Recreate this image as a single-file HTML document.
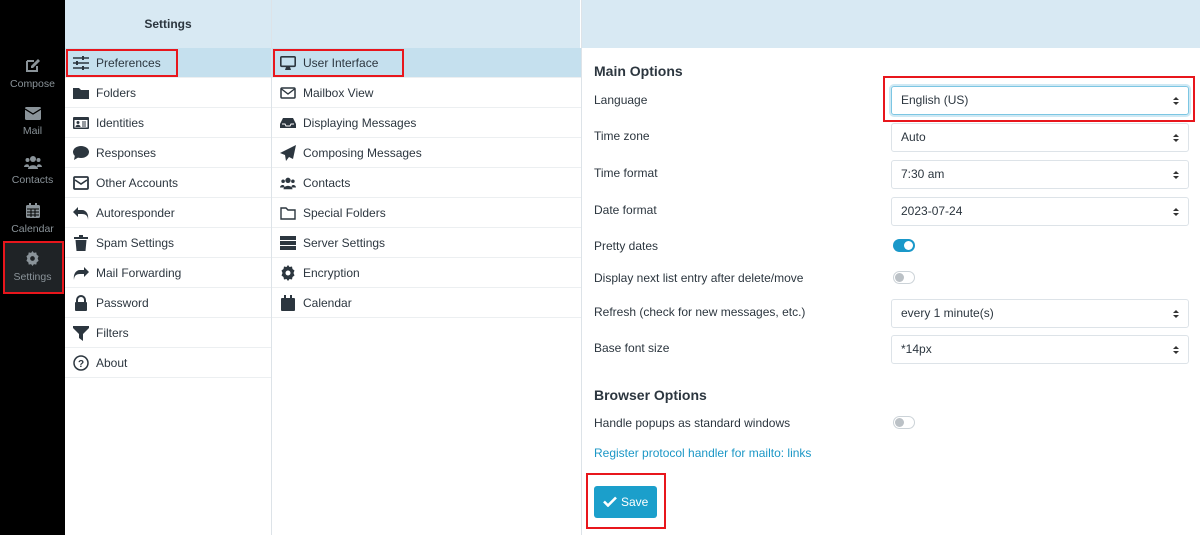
<!DOCTYPE html>
<html><head><meta charset="utf-8"><style>
*{box-sizing:border-box;margin:0;padding:0}
body{width:1200px;height:535px;overflow:hidden;background:#fff;font-family:"Liberation Sans",sans-serif;color:#2c363f;position:relative;font-size:12px}
.abs{position:absolute}
#side{left:0;top:0;width:65px;height:535px;background:#000}
.si{position:absolute;left:0;width:65px;text-align:center;color:#8a9399;font-size:10.5px}
.si svg{display:block;margin:0 auto 5px}
.hdr{position:absolute;top:0;height:48px;background:#d8e9f3}
.row{position:absolute;height:30px;border-bottom:1px solid #eceff1;display:flex;align-items:center;font-size:12px;color:#2c363f}
.row svg{width:16px;height:16px;margin:0 7px 0 8px;flex:none}
.sel{background:#c5e0ee}
.lbl{position:absolute;left:594px;font-size:12px;color:#2c363f}
.sel2{position:absolute;left:891px;width:298px;height:29px;border:1px solid #dde3e8;border-radius:3px;font-size:12px;padding:0 0 0 9px;line-height:27px;color:#2c363f}
.sel2:after{content:"";position:absolute;right:9px;top:10px;border:3px solid transparent;border-bottom:3.5px solid #333;border-top:none}
.sel2:before{content:"";position:absolute;right:9px;top:15px;border:3px solid transparent;border-top:3.5px solid #333;border-bottom:none}
.red{position:absolute;border:2px solid #e8161c}
.tg{position:absolute;left:893px;width:22px;height:13px;border-radius:7px}
.tg.on{background:#1a98c9}
.tg.on:after{content:"";position:absolute;right:2px;top:2px;width:9px;height:9px;border-radius:50%;background:#fff}
.tg.off{border:1px solid #ccd3d8;background:#fff}
.tg.off:after{content:"";position:absolute;left:1px;top:1px;width:9px;height:9px;border-radius:50%;background:#bbc1c6}
h3{position:absolute;left:594px;font-size:14px;font-weight:bold;color:#2c363f}
</style></head><body>
<div id="side" class="abs"></div>
<div class="si" style="top:58px"><svg width="16" height="15" viewBox="0 0 16 15"><path d="M2 3h7M2 3v10h10V8" stroke="#8a9399" stroke-width="2" fill="none"/><path d="M13 1l2 2-7 7H6V8z" fill="#8a9399"/></svg>Compose</div>
<div class="si" style="top:107px"><svg width="16" height="13" viewBox="0 0 16 13"><rect x="0" y="0" width="16" height="13" rx="1.5" fill="#8a9399"/><path d="M0 2l8 5 8-5" stroke="#000" stroke-width="1.3" fill="none"/></svg>Mail</div>
<div class="si" style="top:155px"><svg width="18" height="14" viewBox="0 0 18 14"><circle cx="9" cy="4" r="3" fill="#8a9399"/><circle cx="3.5" cy="5" r="2" fill="#8a9399"/><circle cx="14.5" cy="5" r="2" fill="#8a9399"/><path d="M4 14c0-5 10-5 10 0zM0 12c0-3 5-4 5-1v1zM18 12c0-3-5-4-5-1v1z" fill="#8a9399"/></svg>Contacts</div>
<div class="si" style="top:203px"><svg width="14" height="15" viewBox="0 0 14 15"><rect x="0" y="2" width="14" height="13" rx="1.5" fill="#8a9399"/><rect x="3" y="0" width="2" height="4" fill="#8a9399"/><rect x="9" y="0" width="2" height="4" fill="#8a9399"/><path d="M1 6h12M1 9h12M1 12h12M5 6v8M9 6v8" stroke="#000" stroke-width="1"/></svg>Calendar</div>
<div class="abs" style="left:3px;top:241px;width:61px;height:53px;background:#1f2326;border:2px solid #e8161c"></div>
<div class="si" style="top:251px"><svg width="15" height="15" viewBox="0 0 16 16"><path d="M8 0l1.5 2 2.5-.5.5 2.5 2 1.5-1 2.5 1 2.5-2 1.5-.5 2.5-2.5-.5L8 16l-1.5-2-2.5.5-.5-2.5-2-1.5 1-2.5-1-2.5 2-1.5.5-2.5 2.5.5z" fill="#8a9399"/><circle cx="8" cy="8" r="2.5" fill="#1f2326"/></svg>Settings</div>

<div class="hdr" style="left:65px;width:206px;text-align:center;line-height:48px;font-weight:bold;font-size:12px;color:#2c363f">Settings</div>
<div class="hdr" style="left:272px;width:308px"></div>
<div class="hdr" style="left:582px;width:618px"></div>
<div class="abs" style="left:271px;top:0;width:1px;height:535px;background:#dde3e8"></div>
<div class="abs" style="left:581px;top:0;width:1px;height:535px;background:#dde3e8"></div>

<div class="row sel" style="left:65px;top:48px;width:206px"><svg viewBox="0 0 16 16"><path d="M0 3h16M0 8h16M0 13h16" stroke="#2c363f" stroke-width="1.5"/><path d="M10 1v4M4 6v4M10 11v4" stroke="#2c363f" stroke-width="2"/></svg>Preferences</div>
<div class="row" style="left:65px;top:78px;width:206px"><svg viewBox="0 0 16 16"><path d="M0 3h6l2 2h8v9H0z" fill="#2c363f"/></svg>Folders</div>
<div class="row" style="left:65px;top:108px;width:206px"><svg viewBox="0 0 16 16"><rect x="0" y="2" width="16" height="12" rx="1" fill="#2c363f"/><rect x="1.5" y="5" width="13" height="7.5" fill="#fff"/><circle cx="5" cy="7.5" r="1.5" fill="#2c363f"/><path d="M2.5 12c0-3 5-3 5 0z" fill="#2c363f"/><path d="M9 7h4M9 9h4M9 11h4" stroke="#2c363f"/></svg>Identities</div>
<div class="row" style="left:65px;top:138px;width:206px"><svg viewBox="0 0 16 16"><ellipse cx="8" cy="7" rx="8" ry="6" fill="#2c363f"/><path d="M2 10l-1 5 5-3z" fill="#2c363f"/></svg>Responses</div>
<div class="row" style="left:65px;top:168px;width:206px"><svg viewBox="0 0 16 16"><rect x="1" y="2" width="14" height="12" rx="1" stroke="#2c363f" stroke-width="1.8" fill="none"/><path d="M2 5l6 4 6-4" stroke="#2c363f" stroke-width="1.6" fill="none"/></svg>Other Accounts</div>
<div class="row" style="left:65px;top:198px;width:206px"><svg viewBox="0 0 16 16"><path d="M5 2L0 7l5 5V9h4c4 0 6 2 6 6 1-6-2-10-6-10H5z" fill="#2c363f"/></svg>Autoresponder</div>
<div class="row" style="left:65px;top:228px;width:206px"><svg viewBox="0 0 16 16"><path d="M1 2h14v2H1zM6 0h4v2H6zM2.5 5h11l-1 11h-9z" fill="#2c363f"/></svg>Spam Settings</div>
<div class="row" style="left:65px;top:258px;width:206px"><svg viewBox="0 0 16 16"><path d="M11 2l5 5-5 5V9H7c-4 0-6 2-6 6-1-6 2-10 6-10h4z" fill="#2c363f"/></svg>Mail Forwarding</div>
<div class="row" style="left:65px;top:288px;width:206px"><svg viewBox="0 0 16 16"><path d="M4 7V5a4 4 0 018 0v2" stroke="#2c363f" stroke-width="2" fill="none"/><rect x="2" y="7" width="12" height="9" rx="1" fill="#2c363f"/></svg>Password</div>
<div class="row" style="left:65px;top:318px;width:206px"><svg viewBox="0 0 16 16"><path d="M0 1h16v2l-6 6v7l-4-3V9L0 3z" fill="#2c363f"/></svg>Filters</div>
<div class="row" style="left:65px;top:348px;width:206px"><svg viewBox="0 0 16 16"><circle cx="8" cy="8" r="7" stroke="#2c363f" stroke-width="1.5" fill="none"/><text x="8" y="12" font-size="10" font-weight="bold" text-anchor="middle" fill="#2c363f" font-family="Liberation Sans">?</text></svg>About</div>
<div class="red" style="left:66px;top:49px;width:112px;height:28px"></div>

<div class="row sel" style="left:272px;top:48px;width:309px"><svg viewBox="0 0 16 16"><rect x="0.8" y="1.8" width="14.4" height="9.5" rx="1" stroke="#2c363f" stroke-width="1.6" fill="none"/><path d="M6 12l-1 3h6l-1-3z" fill="#2c363f"/></svg>User Interface</div>
<div class="row" style="left:272px;top:78px;width:309px"><svg viewBox="0 0 16 16"><rect x="1" y="3" width="14" height="10" rx="1" stroke="#2c363f" stroke-width="1.5" fill="none"/><path d="M1.5 4l6.5 5 6.5-5" stroke="#2c363f" stroke-width="1.4" fill="none"/></svg>Mailbox View</div>
<div class="row" style="left:272px;top:108px;width:309px"><svg viewBox="0 0 16 16"><path d="M3 3h10l3 6v4H0V9z" fill="#2c363f"/><path d="M2 9h3l1 2h4l1-2h3" stroke="#fff" fill="none"/></svg>Displaying Messages</div>
<div class="row" style="left:272px;top:138px;width:309px"><svg viewBox="0 0 16 16"><path d="M16 0L0 8l5 2 1 6 3-4 4 2z" fill="#2c363f"/></svg>Composing Messages</div>
<div class="row" style="left:272px;top:168px;width:309px"><svg viewBox="0 0 18 16"><circle cx="9" cy="5" r="3" fill="#2c363f"/><circle cx="3.5" cy="6" r="2" fill="#2c363f"/><circle cx="14.5" cy="6" r="2" fill="#2c363f"/><path d="M4 15c0-5 10-5 10 0zM0 13c0-3 5-4 5-1v1zM18 13c0-3-5-4-5-1v1z" fill="#2c363f"/></svg>Contacts</div>
<div class="row" style="left:272px;top:198px;width:309px"><svg viewBox="0 0 16 16"><path d="M1 3h5l2 2h7v9H1z" stroke="#2c363f" stroke-width="1.4" fill="none"/></svg>Special Folders</div>
<div class="row" style="left:272px;top:228px;width:309px"><svg viewBox="0 0 16 16"><rect x="0" y="1" width="16" height="4" fill="#2c363f"/><rect x="0" y="6" width="16" height="4" fill="#2c363f"/><rect x="0" y="11" width="16" height="4" fill="#2c363f"/></svg>Server Settings</div>
<div class="row" style="left:272px;top:258px;width:309px"><svg viewBox="0 0 16 16"><path d="M8 0l1.5 2 2.5-.5.5 2.5 2 1.5-1 2.5 1 2.5-2 1.5-.5 2.5-2.5-.5L8 16l-1.5-2-2.5.5-.5-2.5-2-1.5 1-2.5-1-2.5 2-1.5.5-2.5 2.5.5z" fill="#2c363f"/><circle cx="8" cy="8" r="2.5" fill="#fff"/></svg>Encryption</div>
<div class="row" style="left:272px;top:288px;width:309px"><svg viewBox="0 0 16 16"><rect x="1" y="3" width="14" height="13" rx="1" fill="#2c363f"/><rect x="4" y="0" width="2" height="4" fill="#2c363f"/><rect x="10" y="0" width="2" height="4" fill="#2c363f"/></svg>Calendar</div>
<div class="red" style="left:273px;top:49px;width:131px;height:28px"></div>

<h3 style="top:63px">Main Options</h3>
<div class="lbl" style="top:93px">Language</div>
<div class="sel2" style="top:86px;border-color:#7cc6e3;box-shadow:0 0 0 2px #cfe9f4">English (US)</div>
<div class="red" style="left:883px;top:76px;width:312px;height:46px"></div>
<div class="lbl" style="top:129px">Time zone</div>
<div class="sel2" style="top:123px">Auto</div>
<div class="lbl" style="top:166px">Time format</div>
<div class="sel2" style="top:160px">7:30 am</div>
<div class="lbl" style="top:203px">Date format</div>
<div class="sel2" style="top:197px">2023-07-24</div>
<div class="lbl" style="top:239px">Pretty dates</div>
<div class="tg on" style="top:239px"></div>
<div class="lbl" style="top:271px">Display next list entry after delete/move</div>
<div class="tg off" style="top:271px"></div>
<div class="lbl" style="top:305px">Refresh (check for new messages, etc.)</div>
<div class="sel2" style="top:299px">every 1 minute(s)</div>
<div class="lbl" style="top:341px">Base font size</div>
<div class="sel2" style="top:335px">*14px</div>
<h3 style="top:387px">Browser Options</h3>
<div class="lbl" style="top:416px">Handle popups as standard windows</div>
<div class="tg off" style="top:416px"></div>
<div class="lbl" style="top:446px;color:#1c97c6">Register protocol handler for mailto: links</div>
<div class="abs" style="left:594px;top:486px;width:63px;height:32px;background:#1b9fcb;border-radius:3px;color:#fff;font-size:12px;line-height:32px;padding-left:9px"><svg width="14" height="11" viewBox="0 0 14 11" style="vertical-align:-1px;margin-right:4px"><path d="M1 5.5l4 4L13 1.5" stroke="#fff" stroke-width="2.6" fill="none"/></svg>Save</div>
<div class="red" style="left:586px;top:473px;width:80px;height:56px"></div>
</body></html>
